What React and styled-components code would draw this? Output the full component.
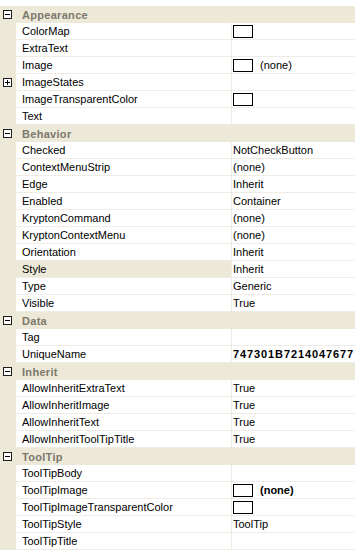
import React from "react";
import styled, { createGlobalStyle } from "styled-components";

const GlobalStyle = createGlobalStyle`
  html, body {
    margin: 0;
    padding: 0;
    background: #ffffff;
  }
`;

const categories = [
  {
    name: "Appearance",
    props: [
      { name: "ColorMap", swatch: true },
      { name: "ExtraText" },
      { name: "Image", swatch: true, value: "(none)" },
      { name: "ImageStates", expandable: true },
      { name: "ImageTransparentColor", swatch: true },
      { name: "Text" },
    ],
  },
  {
    name: "Behavior",
    props: [
      { name: "Checked", value: "NotCheckButton" },
      { name: "ContextMenuStrip", value: "(none)" },
      { name: "Edge", value: "Inherit" },
      { name: "Enabled", value: "Container" },
      { name: "KryptonCommand", value: "(none)" },
      { name: "KryptonContextMenu", value: "(none)" },
      { name: "Orientation", value: "Inherit" },
      { name: "Style", value: "Inherit", selected: true },
      { name: "Type", value: "Generic" },
      { name: "Visible", value: "True" },
    ],
  },
  {
    name: "Data",
    props: [
      { name: "Tag" },
      { name: "UniqueName", value: "747301B7214047677", bold: true, wide: true },
    ],
  },
  {
    name: "Inherit",
    props: [
      { name: "AllowInheritExtraText", value: "True" },
      { name: "AllowInheritImage", value: "True" },
      { name: "AllowInheritText", value: "True" },
      { name: "AllowInheritToolTipTitle", value: "True" },
    ],
  },
  {
    name: "ToolTip",
    props: [
      { name: "ToolTipBody" },
      { name: "ToolTipImage", swatch: true, value: "(none)", bold: true },
      { name: "ToolTipImageTransparentColor", swatch: true },
      { name: "ToolTipStyle", value: "ToolTip" },
      { name: "ToolTipTitle" },
    ],
  },
];

const Grid = styled.div`
  width: 355px;
  margin-top: 6px;
  font-family: "Liberation Sans", Arial, sans-serif;
  font-size: 11px;
  color: #000000;
`;

const HeaderRow = styled.div`
  display: flex;
  align-items: center;
  height: 17px;
  background: #ece9d8;
`;

const Gutter = styled.div`
  width: 16px;
  height: 100%;
  flex: none;
  display: flex;
  align-items: center;
  justify-content: center;
  background: #ece9d8;
`;

const ToggleBox = styled.span`
  position: relative;
  box-sizing: border-box;
  width: 9px;
  height: 9px;
  margin-left: -1px;
  border: 1px solid #1e1e1e;
  background: #ffffff;

  &::before {
    content: "";
    position: absolute;
    left: 1px;
    top: 3px;
    width: 5px;
    height: 1px;
    background: #000000;
  }

  &::after {
    content: "";
    display: ${(p) => (p.$open ? "none" : "block")};
    position: absolute;
    left: 3px;
    top: 1px;
    width: 1px;
    height: 5px;
    background: #000000;
  }
`;

const HeaderLabel = styled.span`
  padding-left: 6px;
  font-weight: bold;
  color: #7d786c;
  letter-spacing: 0.3px;
`;

const PropRow = styled.div`
  display: flex;
  height: 17px;
  box-sizing: border-box;
`;

const NameCell = styled.div`
  width: 216px;
  flex: none;
  box-sizing: border-box;
  padding-left: 6px;
  line-height: 16px;
  white-space: nowrap;
  overflow: hidden;
  border-bottom: 1px solid #efede3;
  border-right: 1px solid #efede3;
  background: ${(p) => (p.$selected ? "#ece9d8" : "#ffffff")};
`;

const ValueCell = styled.div`
  flex: 1;
  min-width: 0;
  display: flex;
  align-items: center;
  gap: 7px;
  box-sizing: border-box;
  padding-left: 1px;
  border-bottom: 1px solid #efede3;
  white-space: nowrap;
  overflow: hidden;
`;

const Swatch = styled.span`
  flex: none;
  box-sizing: border-box;
  width: 20px;
  height: 13px;
  border: 1px solid #000000;
  background: #ffffff;
`;

const Value = styled.span`
  line-height: 16px;
  font-weight: ${(p) => (p.$bold ? "bold" : "normal")};
  letter-spacing: ${(p) => (p.$wide ? "0.9px" : "0")};
`;

const Category = ({ category }) => (
  <>
    <HeaderRow>
      <Gutter>
        <ToggleBox $open />
      </Gutter>
      <HeaderLabel>{category.name}</HeaderLabel>
    </HeaderRow>
    {category.props.map((prop) => (
      <PropRow key={prop.name}>
        <Gutter>{prop.expandable && <ToggleBox />}</Gutter>
        <NameCell $selected={prop.selected}>{prop.name}</NameCell>
        <ValueCell>
          {prop.swatch && <Swatch />}
          {prop.value && (
            <Value $bold={prop.bold} $wide={prop.wide}>
              {prop.value}
            </Value>
          )}
        </ValueCell>
      </PropRow>
    ))}
  </>
);

const App = () => {
  return (
    <>
      <GlobalStyle />
      <Grid>
        {categories.map((c) => (
          <Category key={c.name} category={c} />
        ))}
      </Grid>
    </>
  );
};

export default App;
